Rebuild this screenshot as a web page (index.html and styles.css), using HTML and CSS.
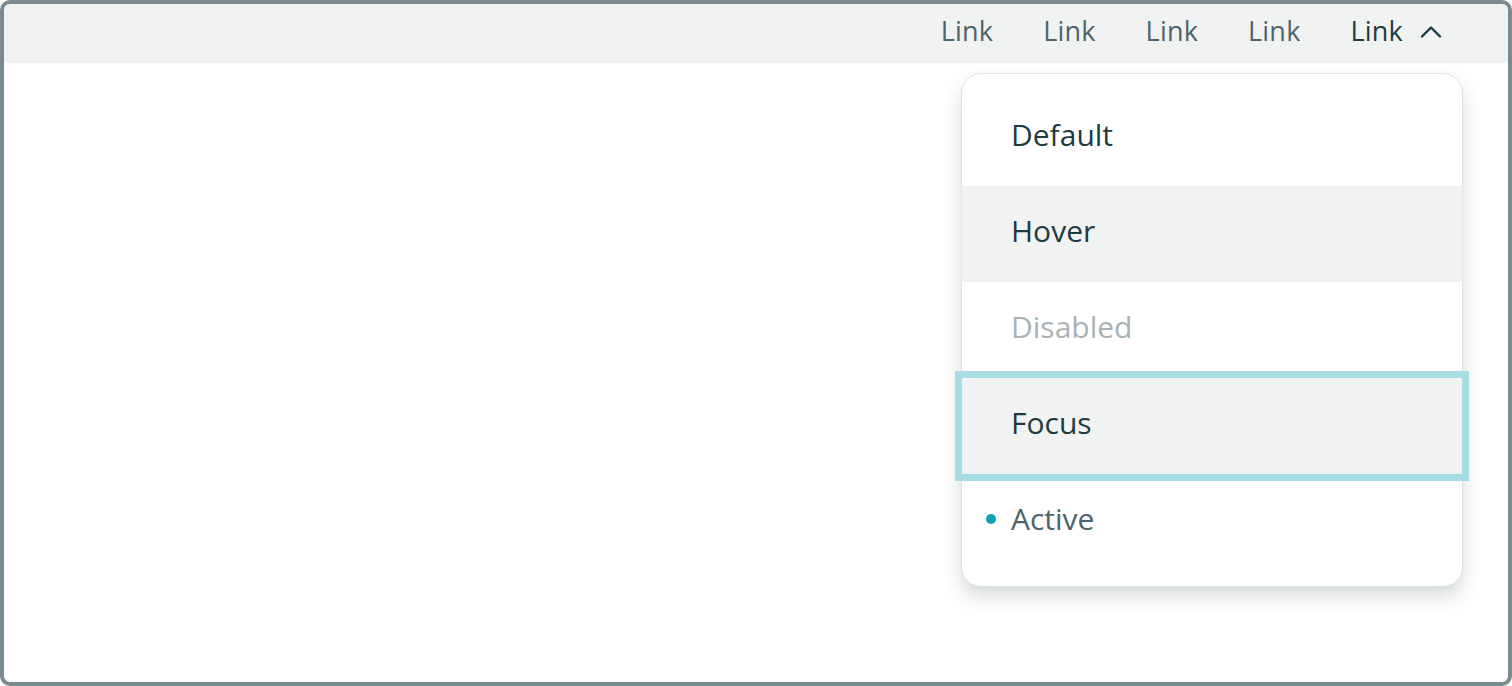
FILE: index.html
```html
<!DOCTYPE html>
<html lang="en">
<head>
<meta charset="utf-8">
<title>Menu</title>
<link rel="stylesheet" href="styles.css">
</head>
<body>
<div class="frame">
  <header class="topbar">
    <nav class="nav">
      <a class="nav-link" href="#">Link</a>
      <a class="nav-link" href="#">Link</a>
      <a class="nav-link" href="#">Link</a>
      <a class="nav-link" href="#">Link</a>
      <a class="nav-link nav-link--open" href="#">Link
        <svg class="chev" width="22" height="13" viewBox="0 0 22 13" aria-hidden="true"><path d="M2 11.5 L11 2.5 L20 11.5" fill="none" stroke="#1d3c44" stroke-width="2.4" stroke-linecap="round" stroke-linejoin="round"/></svg>
      </a>
    </nav>
  </header>
  <ul class="menu">
    <li class="menu-item">Default</li>
    <li class="menu-item menu-item--hover">Hover</li>
    <li class="menu-item menu-item--disabled">Disabled</li>
    <li class="menu-item menu-item--focus">Focus</li>
    <li class="menu-item menu-item--active"><span class="dot"></span>Active</li>
  </ul>
</div>
</body>
</html>
```
FILE: styles.css
```css
* { box-sizing: border-box; }
html, body { margin: 0; padding: 0; background: #ffffff; }
body { font-family: "Open Sans", "Liberation Sans", sans-serif; }
.frame {
  position: relative;
  width: 1512px;
  height: 686px;
  border: 4px solid #7b8b8f;
  border-radius: 10px;
  overflow: hidden;
  background: #ffffff;
}
.topbar {
  height: 59px;
  background: #f1f3f2;
  display: flex;
  justify-content: flex-end;
  align-items: center;
  padding-right: 66px;
  padding-bottom: 7px;
}
.nav { display: flex; align-items: center; gap: 50px; }
.nav-link {
  font-size: 27px;
  font-weight: 400;
  color: #4d646b;
  text-decoration: none;
  letter-spacing: 0.2px;
  display: flex;
  align-items: center;
  gap: 17px;
}
.nav-link--open { color: #1d3c44; }
.chev { display: block; margin-top: 2px; }
.menu {
  position: absolute;
  top: 69px;
  left: 957px;
  width: 502px;
  margin: 0;
  padding: 16px 0;
  list-style: none;
  background: #ffffff;
  border: 1px solid #dde2e4;
  border-radius: 20px;
  box-shadow: 0 10px 18px rgba(40, 55, 60, 0.18);
}
.menu-item {
  height: 96px;
  display: flex;
  align-items: center;
  padding-left: 49px;
  padding-bottom: 8px;
  font-size: 30px;
  font-weight: 400;
  letter-spacing: 0;
  color: #1f3b42;
  position: relative;
}
.menu-item--hover { background: #f1f3f2; }
.menu-item--disabled { color: #a9b2b4; }
.menu-item--focus {
  background: #f1f3f2;
  outline: 7px solid #a6dde5;
  outline-offset: 0;
}
.menu-item--active { color: #4d646b; }
.dot {
  position: absolute;
  left: 24px;
  top: 50%;
  width: 10px;
  height: 10px;
  margin-top: -8px;
  border-radius: 50%;
  background: #0aa3b6;
}
```
